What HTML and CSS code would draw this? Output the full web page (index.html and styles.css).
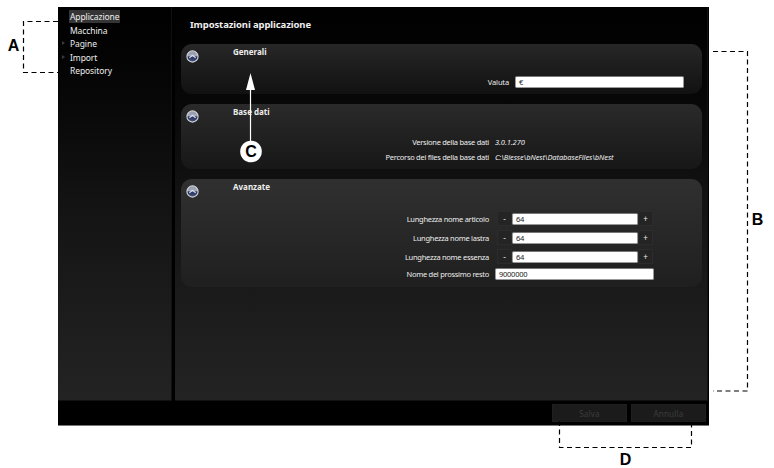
FILE: index.html
```html
<!DOCTYPE html>
<html lang="it">
<head>
<meta charset="utf-8">
<title>Impostazioni applicazione</title>
<link rel="stylesheet" href="styles.css">
</head>
<body>
<svg width="0" height="0" class="defs">
  <defs>
    <linearGradient id="orb" x1="0" y1="0" x2="0" y2="1">
      <stop offset="0" stop-color="#8f96aa"/><stop offset=".42" stop-color="#a3a9ba"/><stop offset=".54" stop-color="#29355f"/><stop offset="1" stop-color="#46547f"/>
    </linearGradient>
    <symbol id="collapse" viewBox="0 0 13 13">
      <circle cx="6.5" cy="6.5" r="5.6" fill="url(#orb)" stroke="#d4d6dc" stroke-width="1.1"/>
      <path d="M3.4 7.7 6.5 5.4 9.6 7.7" fill="none" stroke="#e6e8f0" stroke-width="1.100"/>
    </symbol>
  </defs>
</svg>
<div class="window">
  <div class="body">
    <nav class="sidebar">
      <div class="item"><span class="selected">Applicazione</span></div>
      <div class="item">Macchina</div>
      <div class="item branch">Pagine</div>
      <div class="item branch">Import</div>
      <div class="item">Repository</div>
    </nav>
    <main class="main">
      <h1>Impostazioni applicazione</h1>
      <section class="panel general">
        <header><svg class="orb"><use href="#collapse"/></svg><h2>Generali</h2></header>
        <div class="row currency"><label>Valuta</label><div class="field">€</div></div>
      </section>
      <section class="panel database">
        <header><svg class="orb"><use href="#collapse"/></svg><h2>Base dati</h2></header>
        <div class="row"><label>Versione della base dati</label><em>3.0.1.270</em></div>
        <div class="row"><label>Percorso dei files della base dati</label><em>C:\Biesse\bNest\DatabaseFiles\bNest</em></div>
      </section>
      <section class="panel advanced">
        <header><svg class="orb"><use href="#collapse"/></svg><h2>Avanzate</h2></header>
        <div class="row"><label>Lunghezza nome articolo</label><div class="stepper"><b>-</b><div class="field">64</div><b>+</b></div></div>
        <div class="row"><label>Lunghezza nome lastra</label><div class="stepper"><b>-</b><div class="field">64</div><b>+</b></div></div>
        <div class="row"><label>Lunghezza nome essenza</label><div class="stepper"><b>-</b><div class="field">64</div><b>+</b></div></div>
        <div class="row last"><label>Nome del prossimo resto</label><div class="field">9000000</div></div>
      </section>
    </main>
  </div>
  <footer class="footer"><div class="button">Salva</div><div class="button">Annulla</div></footer>
</div>
<svg class="callouts" width="774" height="468" viewBox="0 0 774 468">
  <g class="dash">
    <path d="M58 21.5H23.5V72.500H58"/>
    <path d="M713 51.500H747.500V391H713"/>
    <path d="M559.500 421V447.500H691.500V421"/>
  </g>
  <path d="M250.500 141V88" stroke="#fff" stroke-width="1.2"/>
  <path d="M250.500 73 255 90H246Z" fill="#fff"/>
  <circle cx="251" cy="151.500" r="10.800" fill="#fff"/>
  <g class="letters">
    <text x="13.500" y="51">A</text>
    <text x="757.500" y="225">B</text>
    <text x="251" y="157.300">C</text>
    <text x="625.500" y="465">D</text>
  </g>
</svg>
</body>
</html>
```
FILE: styles.css
```css
* { box-sizing: border-box; }
body { margin: 0; width: 774px; height: 468px; overflow: hidden; background: #fff; position: relative; font-family: "Noto Sans", "Open Sans", sans-serif; color: #eee; }
.defs { position: absolute; }
.window { width: 651px; height: 419px; margin: 7px 0 0 58px; background: #000; border-bottom: 1px solid #777; }
.body { display: flex; gap: 3px; height: 394px; }
.sidebar, .main { background: linear-gradient(#000 0%, #060606 20%, #151515 55%, #232323 100%); border-right: 1px solid #111; border-bottom: 1px solid #111; }
.sidebar { width: 114px; padding-top: 3px; }
.item { height: 13.500px; padding-left: 12px; font-size: 8.500px; letter-spacing: -.09px; line-height: 13.500px; display: flex; white-space: nowrap; position: relative; }
.selected { background: #353535; width: 51px; height: 13px; margin-left: -1px; padding-left: 1px; }
.branch::before { content: ""; position: absolute; left: 4px; top: 4px; border: 2.500px solid transparent; border-left: 3px solid #3a3a3a; }
.main { width: 533px; padding: 11px 6px 0; }
h1 { margin: 0 0 12px 9px; font-size: 9.500px; letter-spacing: -.11px; line-height: 14px; font-weight: 700; white-space: nowrap; }
.panel { width: 521px; margin-bottom: 10px; border-radius: 11px; background: linear-gradient(#272727, #111); }
.database { background: linear-gradient(#2a2a2a, #171717); }
.advanced { background: linear-gradient(#303030, #1f1f1f); }
.general { height: 50px; }
.database { height: 65px; }
.advanced { height: 108px; }
.panel header { display: flex; padding: 6px 0 0 5px; height: 31px; }
.database header { height: 30px; }
.advanced header { height: 30px; }
.orb { width: 13px; height: 13px; }
h2 { margin: -4px 0 0 34px; font-size: 8px; line-height: 12px; font-weight: 700; }
.row { display: grid; grid-template-columns: 308px 1fr; column-gap: 6px; align-items: center; height: 15px; font-size: 7.500px; line-height: 12px; white-space: nowrap; }
.row label { text-align: right; letter-spacing: -.28px; }
.row em { letter-spacing: -.09px; }
.currency { grid-template-columns: 328px 169px; height: 13px; }
.currency label { letter-spacing: -.15px; }
.field { width: 169px; height: 12px; padding-left: 3px; background: #fff; border: 1px solid #999; border-top-color: #777; border-radius: 2px; color: #222; line-height: 10px; font-size: 7.500px; letter-spacing: -.25px; }
.row.last .field { width: 159px; }
.advanced .row { height: 19.200px; }
.advanced .row.last { height: 15px; }
.stepper { display: flex; align-items: center; margin-left: 2px; }
.stepper b { width: 15px; height: 15px; border: 1px solid #2c2c2c; background: #242424; text-align: center; line-height: 13px; font-weight: 400; font-size: 8px; }
.stepper .field { width: 126px; }
.footer { height: 24px; display: flex; justify-content: flex-end; gap: 4px; padding: 3px 3px 0 0; }
.button { width: 75px; height: 18px; background: #1b1b1b; border: 1px solid #1f1f1f; color: #3c3c3c; font-size: 8px; letter-spacing: .2px; line-height: 17px; text-align: center; }
.callouts { position: absolute; left: 0; top: 0; }
.dash { fill: none; stroke: #000; stroke-width: 1.200; stroke-dasharray: 5 3.500; }
.letters text { font: 700 16px "Liberation Sans", Arial, sans-serif; text-anchor: middle; fill: #000; }
```
